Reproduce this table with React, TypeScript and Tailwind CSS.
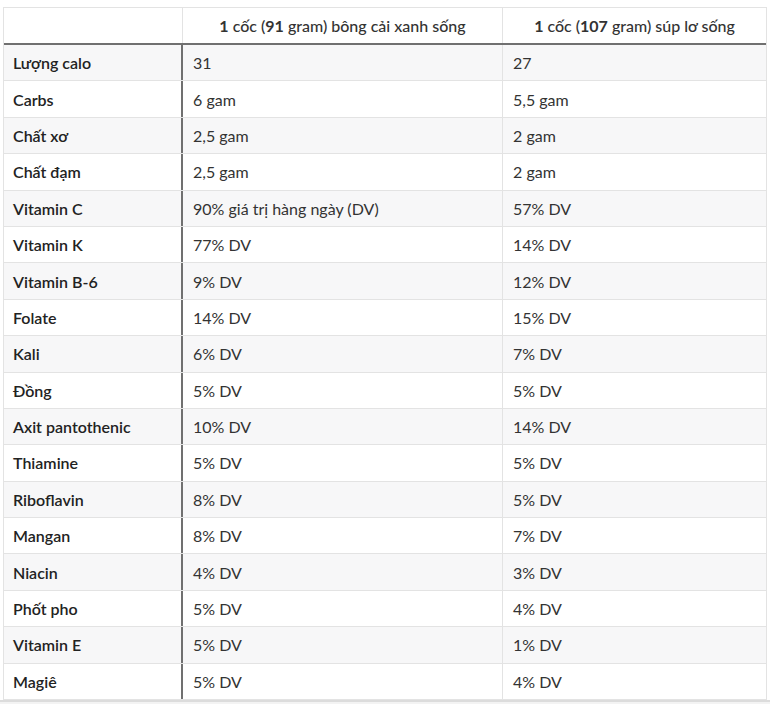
import React from "react";

const rows: [string, string, string][] = [
  ["Lượng calo", "31", "27"],
  ["Carbs", "6 gam", "5,5 gam"],
  ["Chất xơ", "2,5 gam", "2 gam"],
  ["Chất đạm", "2,5 gam", "2 gam"],
  ["Vitamin C", "90% giá trị hàng ngày (DV)", "57% DV"],
  ["Vitamin K", "77% DV", "14% DV"],
  ["Vitamin B-6", "9% DV", "12% DV"],
  ["Folate", "14% DV", "15% DV"],
  ["Kali", "6% DV", "7% DV"],
  ["Đồng", "5% DV", "5% DV"],
  ["Axit pantothenic", "10% DV", "14% DV"],
  ["Thiamine", "5% DV", "5% DV"],
  ["Riboflavin", "8% DV", "5% DV"],
  ["Mangan", "8% DV", "7% DV"],
  ["Niacin", "4% DV", "3% DV"],
  ["Phốt pho", "5% DV", "4% DV"],
  ["Vitamin E", "5% DV", "1% DV"],
  ["Magiê", "5% DV", "4% DV"],
];

export default function App() {
  return (
    <div
      className="w-[770px] h-[704px] bg-white overflow-hidden"
      style={{ fontFamily: "Lato, 'Open Sans', sans-serif" }}
    >
      <div className="ml-[3px] mt-[7px] w-[764px] border-l border-r border-t border-[#e3e3e3] text-[16px] text-[#333]">
        <div className="grid grid-cols-[179px_320px_263px] h-[37px] border-b-2 border-[#707070]">
          <div className="border-r border-[#e3e3e3]" />
          <div className="border-r border-[#e3e3e3] flex items-center justify-center font-medium">
            <span>
              <b className="font-bold">1</b> cốc (<b className="font-bold">91</b> gram) bông cải xanh sống
            </span>
          </div>
          <div className="flex items-center justify-center font-medium">
            <span>
              <b className="font-bold">1</b> cốc (<b className="font-bold">107</b> gram) súp lơ sống
            </span>
          </div>
        </div>
        {rows.map((r, i) => (
          <div
            key={r[0]}
            className={`grid grid-cols-[179px_320px_263px] h-[36.4px] border-b border-[#e3e3e3] ${
              i % 2 === 0 ? "bg-[#f7f7f8]" : "bg-white"
            }`}
          >
            <div className="border-r-2 border-[#707070] flex items-center pl-[9px] pt-[1px] font-semibold text-[#222]">
              {r[0]}
            </div>
            <div className="border-r border-[#e3e3e3] flex items-center pl-[10px] pt-[1px]">
              {r[1]}
            </div>
            <div className="flex items-center pl-[10px] pt-[1px]">{r[2]}</div>
          </div>
        ))}
      </div>
      <div className="h-[2px] bg-[#dcdcdc]" />
      <div className="h-[20px] bg-[#f3f3f3]" />
    </div>
  );
}
